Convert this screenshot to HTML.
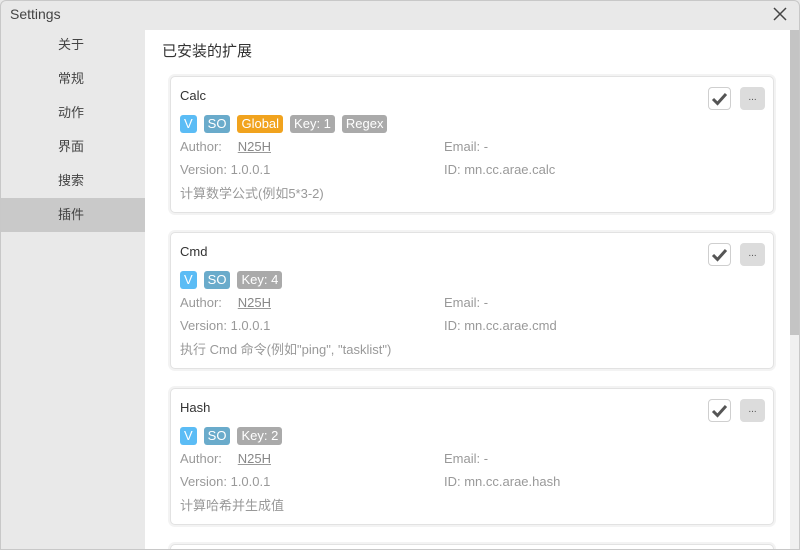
<!DOCTYPE html>
<html><head><meta charset="utf-8"><style>
*{margin:0;padding:0;box-sizing:border-box}
body{width:800px;height:550px;overflow:hidden;background:#e9e9e9;font-family:"Liberation Sans","Noto Sans CJK SC",sans-serif;position:relative;color:#333}
.win{position:absolute;left:0;top:0;width:800px;height:550px;overflow:hidden;background:#e9e9e9}
.frame{position:absolute;left:0;top:0;width:800px;height:550px;border:1px solid #c8c8c8;border-radius:6px 6px 0 0;pointer-events:none}
.title{position:absolute;left:10px;top:6px;font-size:14px;color:#444}
.close{position:absolute;left:772px;top:6px}
.side div{position:absolute;left:0;width:145px;height:34px;line-height:34px;padding-left:58px;font-size:13px;color:#444}
.side .sel{background:#c9c9c9}
.content{position:absolute;left:145px;top:30px;width:645px;height:520px;background:#fff}
.sb{position:absolute;left:790px;top:30px;width:9px;height:520px;background:#f0f0f0}
.thumb{position:absolute;left:790px;top:30px;width:9px;height:305px;background:#c4c4c4}
h2{position:absolute;left:162px;top:40px;font-size:15px;font-weight:normal;color:#333}
.card{position:absolute;left:170px;width:604px;height:137px;border:1px solid #e2e2e2;border-radius:5px;background:#fff;box-shadow:0 0 0 2px #f3f3f3}
.name{position:absolute;left:9px;top:11px;font-size:13px;color:#333}
.tags{position:absolute;left:9px;top:38px;display:flex;gap:7px}
.tag{height:18px;line-height:18px;padding:0 4px;border-radius:3px;color:#fff;font-size:13px}
.v{background:#5bbcf5}.so{background:#6aabcb}.gl{background:#f1a31e}.gr{background:#aaaaaa}
.row{position:absolute;font-size:13px;color:#999}
.row u{color:#888;text-decoration-color:#999;margin-left:5px}
.chk{position:absolute;left:537px;top:10px;width:23px;height:23px;border:1px solid #cfcfcf;border-radius:4px;background:#fff}
.more{position:absolute;left:569px;top:10px;width:25px;height:23px;border-radius:4px;background:#dcdcdc;font-size:10px;color:#555;text-align:center;line-height:22px}
</style></head><body><div class="win">
<div class="title">Settings</div>
<svg class="close" width="16" height="16" viewBox="0 0 16 16"><path d="M2 2L14 14M14 2L2 14" stroke="#444" stroke-width="1.5"/></svg>
<div class="side">
<div style="top:28px">关于</div><div style="top:62px">常规</div><div style="top:96px">动作</div><div style="top:130px">界面</div><div style="top:164px">搜索</div><div class="sel" style="top:198px">插件</div>
</div>
<div class="content"></div>
<div class="sb"></div><div class="thumb"></div>
<h2>已安装的扩展</h2>

<div class="card" style="top:76px">
<div class="name">Calc</div>
<div class="tags"><span class="tag v">V</span><span class="tag so">SO</span><span class="tag gl">Global</span><span class="tag gr">Key: 1</span><span class="tag gr">Regex</span></div>
<div class="row" style="left:9px;top:62px">Author:&nbsp;&nbsp; <u>N25H</u></div>
<div class="row" style="left:273px;top:62px">Email: -</div>
<div class="row" style="left:9px;top:85px">Version: 1.0.0.1</div>
<div class="row" style="left:273px;top:85px">ID: mn.cc.arae.calc</div>
<div class="row" style="left:9px;top:106px">计算数学公式(例如5*3-2)</div>
<div class="chk"><svg width="21" height="21" viewBox="0 0 21 21"><path d="M4 11L8.5 15.5L17 6" stroke="#555" stroke-width="3" fill="none"/></svg></div><div class="more">...</div>
</div>

<div class="card" style="top:232px">
<div class="name">Cmd</div>
<div class="tags"><span class="tag v">V</span><span class="tag so">SO</span><span class="tag gr">Key: 4</span></div>
<div class="row" style="left:9px;top:62px">Author:&nbsp;&nbsp; <u>N25H</u></div>
<div class="row" style="left:273px;top:62px">Email: -</div>
<div class="row" style="left:9px;top:85px">Version: 1.0.0.1</div>
<div class="row" style="left:273px;top:85px">ID: mn.cc.arae.cmd</div>
<div class="row" style="left:9px;top:106px">执行 Cmd 命令(例如"ping", "tasklist")</div>
<div class="chk"><svg width="21" height="21" viewBox="0 0 21 21"><path d="M4 11L8.5 15.5L17 6" stroke="#555" stroke-width="3" fill="none"/></svg></div><div class="more">...</div>
</div>

<div class="card" style="top:388px">
<div class="name">Hash</div>
<div class="tags"><span class="tag v">V</span><span class="tag so">SO</span><span class="tag gr">Key: 2</span></div>
<div class="row" style="left:9px;top:62px">Author:&nbsp;&nbsp; <u>N25H</u></div>
<div class="row" style="left:273px;top:62px">Email: -</div>
<div class="row" style="left:9px;top:85px">Version: 1.0.0.1</div>
<div class="row" style="left:273px;top:85px">ID: mn.cc.arae.hash</div>
<div class="row" style="left:9px;top:106px">计算哈希并生成值</div>
<div class="chk"><svg width="21" height="21" viewBox="0 0 21 21"><path d="M4 11L8.5 15.5L17 6" stroke="#555" stroke-width="3" fill="none"/></svg></div><div class="more">...</div>
</div>

<div class="card" style="top:544px;height:6px;border-bottom:none;border-radius:5px 5px 0 0"></div>
<div class="frame"></div>
</div></body></html>
